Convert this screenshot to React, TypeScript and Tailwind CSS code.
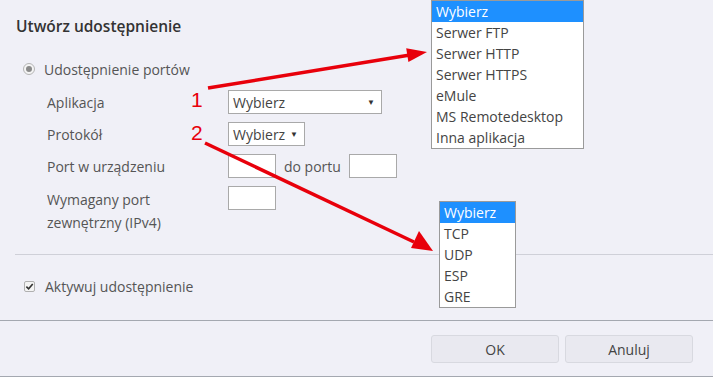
import React from 'react';

const appOptions = ['Wybierz', 'Serwer FTP', 'Serwer HTTP', 'Serwer HTTPS', 'eMule', 'MS Remotedesktop', 'Inna aplikacja'];
const protoOptions = ['Wybierz', 'TCP', 'UDP', 'ESP', 'GRE'];

function SelectBox({ width, label }: { width: string; label: string }) {
  return (
    <div className={`${width} h-6 bg-white border border-[#a9a9a9] flex items-center justify-between pl-[4px] pr-[6px] text-[#444]`}>
      <span>{label}</span>
      <span className="text-[8px] text-[#333]">▼</span>
    </div>
  );
}

function TextBox() {
  return <div className="w-[48px] h-6 bg-white border border-[#a9a9a9]" />;
}

function OpenList({ items, className }: { items: string[]; className: string }) {
  return (
    <ul className={`absolute bg-white border border-[#9a9a9a] text-[14px] text-[#444] leading-[21px] ${className}`}>
      {items.map((item, i) => (
        <li key={item} className={i === 0 ? 'bg-[#1e90ff] text-white pl-[4px]' : 'pl-[4px]'}>
          {item}
        </li>
      ))}
    </ul>
  );
}

export default function App() {
  return (
    <div className="relative w-[713px] h-[377px] overflow-hidden bg-[#f0f0f7] font-['Open_Sans',sans-serif] text-[14px] text-[#555]">
      <div className="h-[321px] border-b border-[#a4a8b0]">
        <h2 className="pl-4 pt-[16px] text-[15.5px] leading-5 font-semibold text-[#333]">Utwórz udostępnienie</h2>

        {/* port sharing */}
        <div className="mt-[23px] h-5 pl-[23px] flex items-center gap-[9px]">
          <span className="w-3 h-3 rounded-full border border-[#b5b5b5] bg-[#f4f4f4] flex items-center justify-center">
            <span className="w-[6px] h-[6px] rounded-full bg-[#8a8a8a]" />
          </span>
          <span>Udostępnienie portów</span>
        </div>

        <div className="mt-[11px] pl-[47px] grid grid-cols-[181px_1fr] gap-y-2">
          <div className="h-6 flex items-center">Aplikacja</div>
          <SelectBox width="w-[154px]" label="Wybierz" />

          <div className="h-6 flex items-center">Protokół</div>
          <SelectBox width="w-[77px]" label="Wybierz" />

          <div className="h-6 flex items-center">Port w urządzeniu</div>
          <div className="flex items-center gap-2">
            <TextBox />
            <span>do portu</span>
            <TextBox />
          </div>

          <div className="pt-[2px] leading-[23px]">
            Wymagany port
            <br />
            zewnętrzny (IPv4)
          </div>
          <div>
            <TextBox />
          </div>
        </div>

        <div className="mt-5 ml-[15px] border-t border-[#cfd0d8]" />

        <div className="mt-[21px] h-5 pl-[24px] flex items-center gap-[10px]">
          <span className="w-[11px] h-[11px] border border-[#b0b0b0] bg-[#f4f4f4] rounded-[2px] flex items-center justify-center">
            <svg viewBox="0 0 10 10" className="w-[9px] h-[9px]">
              <path d="M1.5 5.2 L4 7.6 L8.6 2.2" fill="none" stroke="#333" strokeWidth="1.8" />
            </svg>
          </span>
          <span>Aktywuj udostępnienie</span>
        </div>
      </div>

      <div className="h-[56px] border-b border-[#a4a8b0] flex justify-end gap-[6px] pt-[14px] pr-5">
        <button className="w-[128px] h-[28px] rounded-[3px] border border-[#d8d9e0] bg-[#e9e9f0] text-[#444]">OK</button>
        <button className="w-[128px] h-[28px] rounded-[3px] border border-[#d8d9e0] bg-[#e9e9f0] text-[#444]">Anuluj</button>
      </div>

      {/* open dropdown lists */}
      <OpenList items={appOptions} className="left-[431px] top-0 w-[153px]" />
      <OpenList items={protoOptions} className="left-[439px] top-[201px] w-[77px]" />

      {/* annotation arrows */}
      <svg className="absolute inset-0 pointer-events-none" width="713" height="377">
        <line x1="208" y1="88" x2="410" y2="55" stroke="#e8000b" strokeWidth="3.5" />
        <polygon points="427,52 408.4,62.1 406.2,48.3" fill="#e8000b" />
        <line x1="205" y1="143" x2="414" y2="242" stroke="#e8000b" strokeWidth="3.5" />
        <polygon points="433,251 411,248 419,231" fill="#e8000b" />
      </svg>
      <span className="absolute left-[191px] top-[87px] text-[21px] leading-[26px] text-[#e8000b] font-['Liberation_Sans',sans-serif]">1</span>
      <span className="absolute left-[191px] top-[120px] text-[21px] leading-[26px] text-[#e8000b] font-['Liberation_Sans',sans-serif]">2</span>
    </div>
  );
}
